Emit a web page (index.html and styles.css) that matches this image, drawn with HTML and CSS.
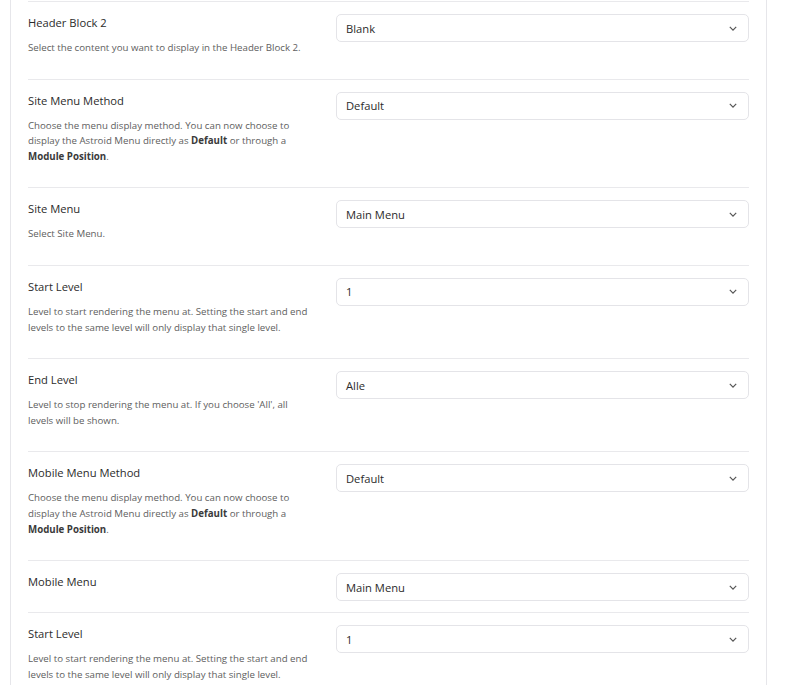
FILE: index.html
```html
<!DOCTYPE html>
<html>
<head>
<meta charset="utf-8">
<link rel="stylesheet" href="styles.css">
</head>
<body>
<div class="card">
  <div class="rows">
    <div class="row">
      <div class="info">
        <div class="label">Header Block 2</div>
        <div class="desc">Select the content you want to display in the Header Block 2.</div>
      </div>
      <div class="field"><div class="select"><span>Blank</span><svg class="chev" viewBox="0 0 10 6"><path d="M1 1l4 4 4-4"/></svg></div></div>
    </div>
    <div class="row">
      <div class="info">
        <div class="label">Site Menu Method</div>
        <div class="desc">Choose the menu display method. You can now choose to display the Astroid Menu directly as <b>Default</b> or through a <b>Module Position</b>.</div>
      </div>
      <div class="field"><div class="select"><span>Default</span><svg class="chev" viewBox="0 0 10 6"><path d="M1 1l4 4 4-4"/></svg></div></div>
    </div>
    <div class="row">
      <div class="info">
        <div class="label">Site Menu</div>
        <div class="desc">Select Site Menu.</div>
      </div>
      <div class="field"><div class="select"><span>Main Menu</span><svg class="chev" viewBox="0 0 10 6"><path d="M1 1l4 4 4-4"/></svg></div></div>
    </div>
    <div class="row">
      <div class="info">
        <div class="label">Start Level</div>
        <div class="desc">Level to start rendering the menu at. Setting the start and end levels to the same level will only display that single level.</div>
      </div>
      <div class="field"><div class="select"><span>1</span><svg class="chev" viewBox="0 0 10 6"><path d="M1 1l4 4 4-4"/></svg></div></div>
    </div>
    <div class="row">
      <div class="info">
        <div class="label">End Level</div>
        <div class="desc">Level to stop rendering the menu at. If you choose 'All', all levels will be shown.</div>
      </div>
      <div class="field"><div class="select"><span>Alle</span><svg class="chev" viewBox="0 0 10 6"><path d="M1 1l4 4 4-4"/></svg></div></div>
    </div>
    <div class="row">
      <div class="info">
        <div class="label">Mobile Menu Method</div>
        <div class="desc">Choose the menu display method. You can now choose to display the Astroid Menu directly as <b>Default</b> or through a <b>Module Position</b>.</div>
      </div>
      <div class="field"><div class="select"><span>Default</span><svg class="chev" viewBox="0 0 10 6"><path d="M1 1l4 4 4-4"/></svg></div></div>
    </div>
    <div class="row">
      <div class="info">
        <div class="label">Mobile Menu</div>
      </div>
      <div class="field"><div class="select"><span>Main Menu</span><svg class="chev" viewBox="0 0 10 6"><path d="M1 1l4 4 4-4"/></svg></div></div>
    </div>
    <div class="row">
      <div class="info">
        <div class="label">Start Level</div>
        <div class="desc">Level to start rendering the menu at. Setting the start and end levels to the same level will only display that single level.</div>
      </div>
      <div class="field"><div class="select"><span>1</span><svg class="chev" viewBox="0 0 10 6"><path d="M1 1l4 4 4-4"/></svg></div></div>
    </div>
  </div>
</div>
</body>
</html>
```

FILE: styles.css
```css
html, body {
  margin: 0;
  padding: 0;
  background: #fff;
  font-family: "Open Sans", "Noto Sans", sans-serif;
  color: #333;
  overflow: hidden;
}

.card {
  box-sizing: border-box;
  margin-left: 10px;
  width: 757px;
  height: 700px;
  border-left: 1px solid #e6e6ea;
  border-right: 1px solid #e6e6ea;
  padding: 1px 17px 0 17px;
}

.rows {
  display: flex;
  flex-direction: column;
}

.row {
  display: flex;
  border-top: 1px solid #e9e9ec;
  padding: 12px 0 11px;
}

.info {
  width: 284px;
  padding-right: 24px;
  flex: none;
}

.label {
  font-size: 11.2px;
  line-height: 18px;
  color: #2b2b2b;
}

.desc {
  margin-top: 8px;
  margin-bottom: 12px;
  font-size: 9.7px;
  line-height: 15.6px;
  color: #606060;
}

.desc b {
  color: #3a3a3a;
  font-weight: 700;
}

.field {
  flex: 1;
}

.select {
  height: 28px;
  box-sizing: border-box;
  border: 1px solid #e4e4e8;
  border-radius: 5px;
  display: flex;
  align-items: center;
  justify-content: space-between;
  padding: 0 10px 0 9px;
  font-size: 11.2px;
  color: #2b2b2b;
}

.chev {
  width: 8px;
  height: 5px;
  fill: none;
  stroke: #555;
  stroke-width: 1.5;
  margin-right: 1px;
}
```
